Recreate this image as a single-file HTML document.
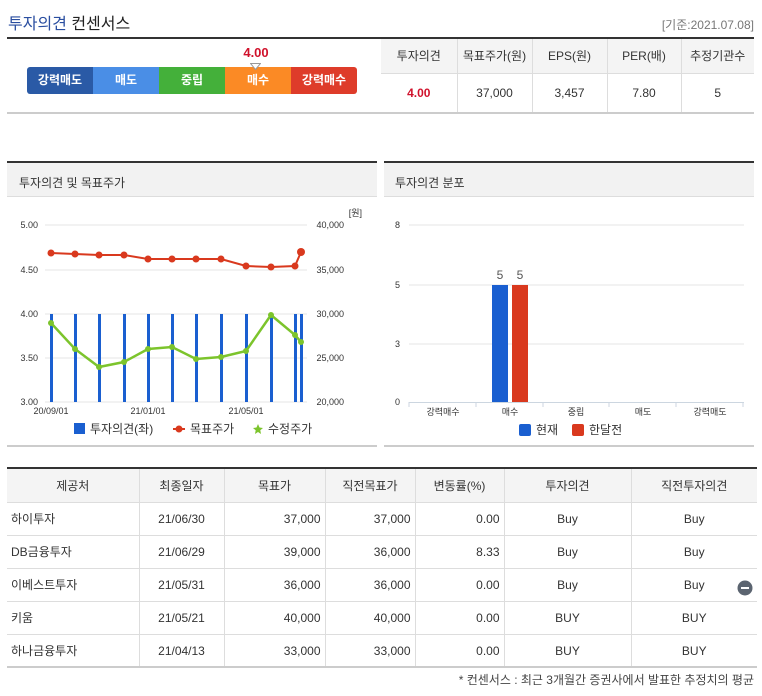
<!DOCTYPE html>
<html><head><meta charset="utf-8"><style>
*{margin:0;padding:0;box-sizing:border-box}
body{width:762px;height:696px;background:#fff;font-family:"Liberation Sans","Noto Sans CJK KR",sans-serif;color:#333;position:relative;overflow:hidden;font-size:12px}
.a{position:absolute}
table{border-collapse:collapse;position:absolute;font-size:12px;color:#333}
td,th{font-weight:normal;text-align:center}
</style></head><body>
<div class="a" style="left:8px;top:10px;font-size:16px;color:#222"><span style="color:#2a4ea0">투자의견</span> 컨센서스</div>
<div class="a" style="right:8px;top:16px;font-size:12px;color:#777">[기준:2021.07.08]</div>
<div class="a" style="left:7px;top:37px;width:747px;height:2px;background:#333"></div>
<div class="a" style="left:7px;top:112px;width:374px;height:2px;background:#ccc"></div>
<div class="a" style="left:27px;top:67px;width:330px;height:27px;border-radius:3px;overflow:hidden;display:flex;color:#fff;font-size:12px;font-weight:bold">
<div style="width:66px;background:#2a5aa6;text-align:center;line-height:27px">강력매도</div>
<div style="width:66px;background:#4a8ee6;text-align:center;line-height:27px">매도</div>
<div style="width:66px;background:#44b03a;text-align:center;line-height:27px">중립</div>
<div style="width:66px;background:#fb8a25;text-align:center;line-height:27px">매수</div>
<div style="width:66px;background:#de3c2a;text-align:center;line-height:27px">강력매수</div>
</div>
<div class="a" style="left:240px;top:45px;width:32px;text-align:center;color:#d0112b;font-weight:bold;font-size:13px">4.00</div>
<svg class="a" style="left:250px;top:63px" width="11" height="8"><polygon points="0.5,0.5 10.5,0.5 5.5,6.5" fill="#fff" stroke="#999"/></svg>
<table style="left:381px;top:39px;width:373px">
<tr style="background:#f4f4f4;height:34px"><td style="width:76px;border-right:1px solid #ddd">투자의견</td><td style="width:75px;border-right:1px solid #ddd">목표주가(원)</td><td style="width:75px;border-right:1px solid #ddd">EPS(원)</td><td style="width:74px;border-right:1px solid #ddd">PER(배)</td><td>추정기관수</td></tr>
<tr style="height:39px;border-top:1px solid #ddd"><td style="border-right:1px solid #ddd;color:#d0112b;font-weight:bold">4.00</td><td style="border-right:1px solid #ddd">37,000</td><td style="border-right:1px solid #ddd">3,457</td><td style="border-right:1px solid #ddd">7.80</td><td>5</td></tr>
</table>
<div class="a" style="left:381px;top:112px;width:373px;height:2px;background:#ccc"></div>

<!-- left chart panel -->
<div class="a" style="left:7px;top:161px;width:370px;height:2px;background:#333"></div>
<div class="a" style="left:7px;top:163px;width:370px;height:34px;background:#f2f2f2;border-bottom:1px solid #ddd;padding:11px 0 0 12px;font-size:12px">투자의견 및 목표주가</div>
<div class="a" style="left:7px;top:445px;width:370px;height:2px;background:#ccc"></div>
<svg class="a" style="left:0;top:200px" width="381" height="245" font-family="Liberation Sans,Noto Sans CJK KR,sans-serif" font-size="9" fill="#333">
<g stroke="#e4e4e4"><line x1="45" x2="307" y1="25" y2="25"/><line x1="45" x2="307" y1="70" y2="70"/><line x1="45" x2="307" y1="114" y2="114"/><line x1="45" x2="307" y1="158" y2="158"/><line x1="45" x2="307" y1="202" y2="202"/></g>
<g text-anchor="end"><text x="38" y="28">5.00</text><text x="38" y="73">4.50</text><text x="38" y="117">4.00</text><text x="38" y="161">3.50</text><text x="38" y="205">3.00</text></g>
<g text-anchor="end"><text x="344" y="28">40,000</text><text x="344" y="73">35,000</text><text x="344" y="117">30,000</text><text x="344" y="161">25,000</text><text x="344" y="205">20,000</text><text x="362" y="16">[원]</text></g>
<g fill="#1a5fd0"><rect x="50" y="114" width="3" height="88"/><rect x="74" y="114" width="3" height="88"/><rect x="98" y="114" width="3" height="88"/><rect x="123" y="114" width="3" height="88"/><rect x="147" y="114" width="3" height="88"/><rect x="171" y="114" width="3" height="88"/><rect x="195" y="114" width="3" height="88"/><rect x="220" y="114" width="3" height="88"/><rect x="245" y="114" width="3" height="88"/><rect x="270" y="114" width="3" height="88"/><rect x="294" y="114" width="3" height="88"/><rect x="300" y="114" width="3" height="88"/></g>
<polyline fill="none" stroke="#d9391e" stroke-width="2" points="51,53 75,54 99,55 124,55 148,59 172,59 196,59 221,59 246,66 271,67 295,66 301,52"/>
<g fill="#d9391e"><circle cx="51" cy="53" r="3.5"/><circle cx="75" cy="54" r="3.5"/><circle cx="99" cy="55" r="3.5"/><circle cx="124" cy="55" r="3.5"/><circle cx="148" cy="59" r="3.5"/><circle cx="172" cy="59" r="3.5"/><circle cx="196" cy="59" r="3.5"/><circle cx="221" cy="59" r="3.5"/><circle cx="246" cy="66" r="3.5"/><circle cx="271" cy="67" r="3.5"/><circle cx="295" cy="66" r="3.5"/><circle cx="301" cy="52" r="4"/></g>
<polyline fill="none" stroke="#7cc42c" stroke-width="2.5" points="51,123 75,149 99,167 124,162 148,149 172,147 196,159 221,157 246,151 271,115 295,135 301,142"/>
<g fill="#7cc42c"><circle cx="51" cy="123" r="3"/><circle cx="75" cy="149" r="3"/><circle cx="99" cy="167" r="3"/><circle cx="124" cy="162" r="3"/><circle cx="148" cy="149" r="3"/><circle cx="172" cy="147" r="3"/><circle cx="196" cy="159" r="3"/><circle cx="221" cy="157" r="3"/><circle cx="246" cy="151" r="3"/><circle cx="271" cy="115" r="3"/><circle cx="295" cy="135" r="3"/><circle cx="301" cy="142" r="3"/></g>
<g text-anchor="middle"><text x="51" y="214">20/09/01</text><text x="148" y="214">21/01/01</text><text x="246" y="214">21/05/01</text></g>
<rect x="74" y="223" width="11" height="11" fill="#1a5fd0"/>
<text x="90" y="233" font-size="12">투자의견(좌)</text>
<line x1="173" x2="185" y1="229" y2="229" stroke="#d9391e" stroke-width="2"/><circle cx="179" cy="229" r="3.5" fill="#d9391e"/>
<text x="190" y="233" font-size="12">목표주가</text>
<polygon points="258,224 259.5,227.5 263,228 260.3,230.3 261,234 258,232 255,234 255.7,230.3 253,228 256.5,227.5" fill="#7cc42c"/>
<text x="268" y="233" font-size="12">수정주가</text>
</svg>

<!-- right chart panel -->
<div class="a" style="left:384px;top:161px;width:370px;height:2px;background:#333"></div>
<div class="a" style="left:384px;top:163px;width:370px;height:34px;background:#f2f2f2;border-bottom:1px solid #ddd;padding:11px 0 0 11px;font-size:12px">투자의견 분포</div>
<div class="a" style="left:384px;top:445px;width:370px;height:2px;background:#ccc"></div>
<svg class="a" style="left:381px;top:200px" width="381" height="245" font-family="Liberation Sans,Noto Sans CJK KR,sans-serif" font-size="9" fill="#333">
<g stroke="#e4e4e4"><line x1="28" x2="363" y1="25" y2="25"/><line x1="28" x2="363" y1="85" y2="85"/><line x1="28" x2="363" y1="144" y2="144"/></g>
<line x1="28" x2="363" y1="202.5" y2="202.5" stroke="#ccd6e0"/>
<g stroke="#ccd6e0"><line x1="28" x2="28" y1="202" y2="207"/><line x1="95" x2="95" y1="202" y2="207"/><line x1="162" x2="162" y1="202" y2="207"/><line x1="228" x2="228" y1="202" y2="207"/><line x1="295" x2="295" y1="202" y2="207"/><line x1="362" x2="362" y1="202" y2="207"/></g>
<g text-anchor="end"><text x="19" y="28">8</text><text x="19" y="88">5</text><text x="19" y="147">3</text><text x="19" y="205">0</text></g>
<rect x="111" y="85" width="16" height="117" fill="#1a5fd0"/><rect x="131" y="85" width="16" height="117" fill="#d9391e"/>
<g text-anchor="middle" font-size="12" fill="#555"><text x="119" y="79">5</text><text x="139" y="79">5</text></g>
<g text-anchor="middle"><text x="62" y="215">강력매수</text><text x="129" y="215">매수</text><text x="195" y="215">중립</text><text x="262" y="215">매도</text><text x="329" y="215">강력매도</text></g>
<rect x="138" y="224" width="12" height="12" rx="2" fill="#1a5fd0"/><text x="155" y="234" font-size="12">현재</text>
<rect x="191" y="224" width="12" height="12" rx="2" fill="#d9391e"/><text x="208" y="234" font-size="12">한달전</text>
</svg>

<!-- bottom table -->
<div class="a" style="left:7px;top:467px;width:750px;height:2px;background:#333"></div>
<table style="left:7px;top:469px;width:750px">
<tr style="background:#f4f4f4;height:33px"><td style="width:132px;border-right:1px solid #ddd">제공처</td><td style="width:85px;border-right:1px solid #ddd">최종일자</td><td style="width:101px;border-right:1px solid #ddd">목표가</td><td style="width:90px;border-right:1px solid #ddd">직전목표가</td><td style="width:89px;border-right:1px solid #ddd">변동률(%)</td><td style="width:127px;border-right:1px solid #ddd">투자의견</td><td>직전투자의견</td></tr>
<tbody>
<tr style="height:33px;border-top:1px solid #ddd"><td style="text-align:left;padding-left:4px;border-right:1px solid #ddd">하이투자</td><td style="border-right:1px solid #ddd">21/06/30</td><td style="text-align:right;padding-right:4px;border-right:1px solid #ddd">37,000</td><td style="text-align:right;padding-right:4px;border-right:1px solid #ddd">37,000</td><td style="text-align:right;padding-right:4px;border-right:1px solid #ddd">0.00</td><td style="border-right:1px solid #ddd">Buy</td><td>Buy</td></tr>
<tr style="height:33px;border-top:1px solid #ddd"><td style="text-align:left;padding-left:4px;border-right:1px solid #ddd">DB금융투자</td><td style="border-right:1px solid #ddd">21/06/29</td><td style="text-align:right;padding-right:4px;border-right:1px solid #ddd">39,000</td><td style="text-align:right;padding-right:4px;border-right:1px solid #ddd">36,000</td><td style="text-align:right;padding-right:4px;border-right:1px solid #ddd">8.33</td><td style="border-right:1px solid #ddd">Buy</td><td>Buy</td></tr>
<tr style="height:33px;border-top:1px solid #ddd"><td style="text-align:left;padding-left:4px;border-right:1px solid #ddd">이베스트투자</td><td style="border-right:1px solid #ddd">21/05/31</td><td style="text-align:right;padding-right:4px;border-right:1px solid #ddd">36,000</td><td style="text-align:right;padding-right:4px;border-right:1px solid #ddd">36,000</td><td style="text-align:right;padding-right:4px;border-right:1px solid #ddd">0.00</td><td style="border-right:1px solid #ddd">Buy</td><td>Buy</td></tr>
<tr style="height:33px;border-top:1px solid #ddd"><td style="text-align:left;padding-left:4px;border-right:1px solid #ddd">키움</td><td style="border-right:1px solid #ddd">21/05/21</td><td style="text-align:right;padding-right:4px;border-right:1px solid #ddd">40,000</td><td style="text-align:right;padding-right:4px;border-right:1px solid #ddd">40,000</td><td style="text-align:right;padding-right:4px;border-right:1px solid #ddd">0.00</td><td style="border-right:1px solid #ddd">BUY</td><td>BUY</td></tr>
<tr style="height:33px;border-top:1px solid #ddd"><td style="text-align:left;padding-left:4px;border-right:1px solid #ddd">하나금융투자</td><td style="border-right:1px solid #ddd">21/04/13</td><td style="text-align:right;padding-right:4px;border-right:1px solid #ddd">33,000</td><td style="text-align:right;padding-right:4px;border-right:1px solid #ddd">33,000</td><td style="text-align:right;padding-right:4px;border-right:1px solid #ddd">0.00</td><td style="border-right:1px solid #ddd">BUY</td><td>BUY</td></tr>
</tbody></table>
<div class="a" style="left:7px;top:666px;width:750px;height:2px;background:#ccc"></div>
<svg class="a" style="left:737px;top:580px" width="16" height="16"><circle cx="8" cy="8" r="7.5" fill="#5b6470"/><rect x="4" y="7" width="8" height="2" fill="#fff"/></svg>
<div class="a" style="right:8px;top:671px;font-size:12px;color:#444">* 컨센서스 : 최근 3개월간 증권사에서 발표한 추정치의 평균</div>
</body></html>
